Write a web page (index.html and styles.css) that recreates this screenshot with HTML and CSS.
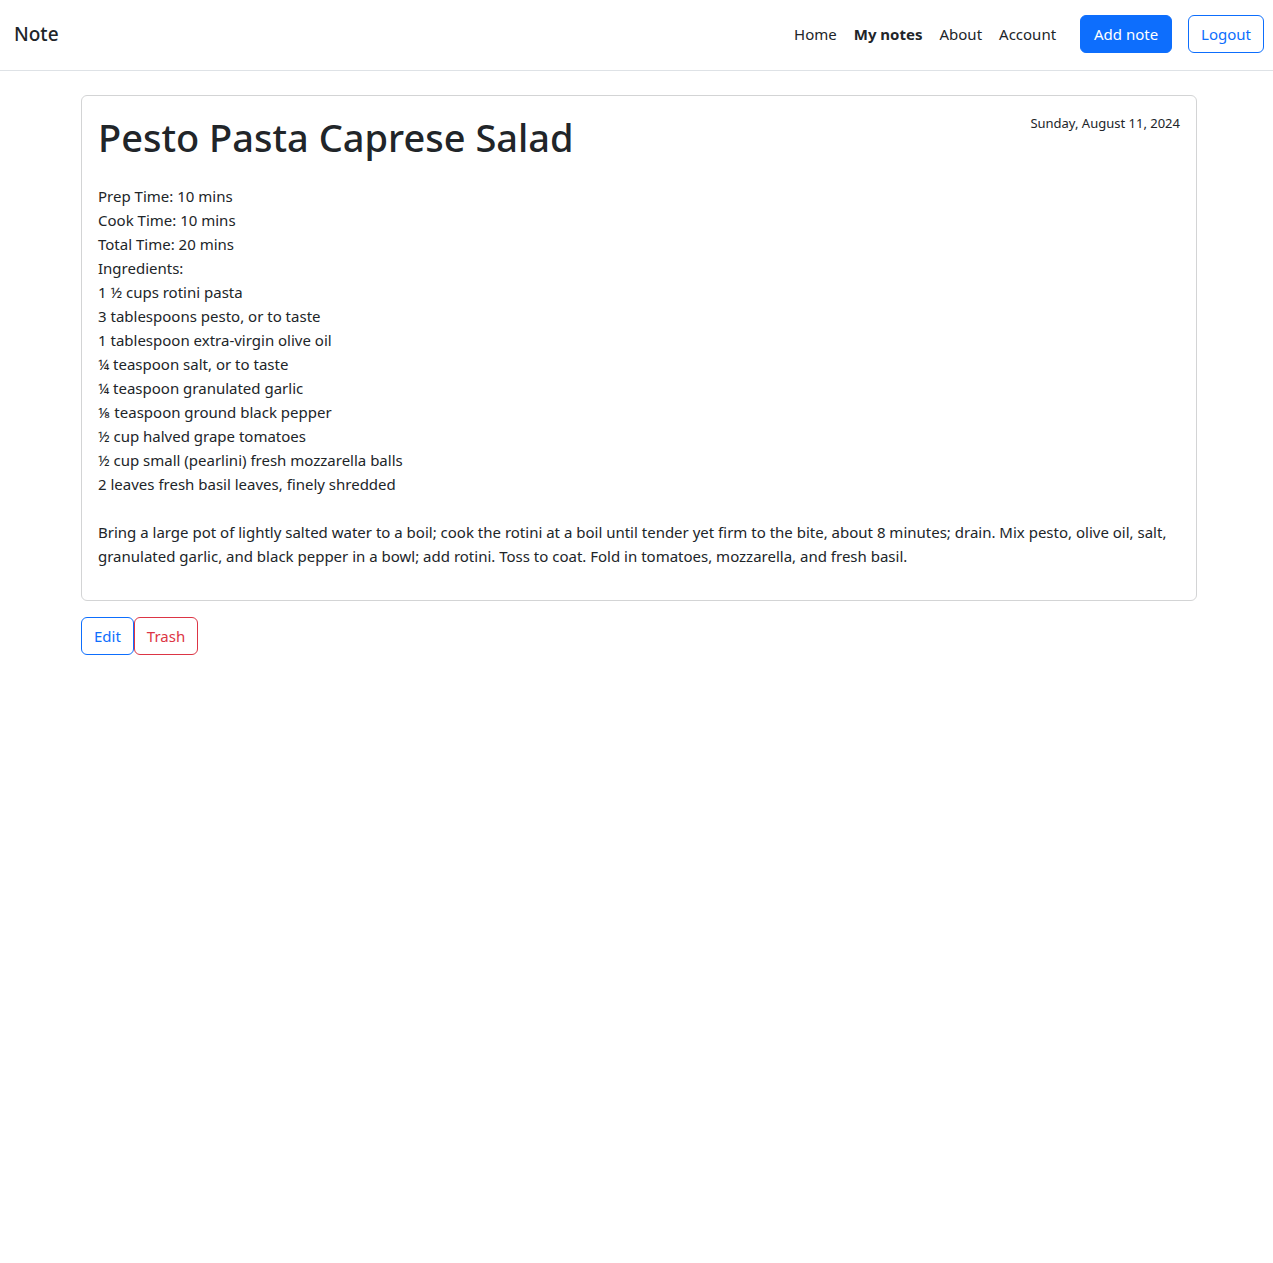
FILE: index.html
```html
<!DOCTYPE html>
<html lang="en">
<head>
  <meta charset="utf-8">
  <meta name="viewport" content="width=device-width, initial-scale=1">
  <title>Note</title>
  <link rel="stylesheet" href="styles.css">
</head>
<body>
  <header class="navbar">
    <a class="brand" href="#">Note</a>
    <nav class="nav">
      <a class="nav-link" href="#">Home</a>
      <a class="nav-link active" href="#" aria-current="page">My notes</a>
      <a class="nav-link" href="#">About</a>
      <a class="nav-link" href="#">Account</a>
    </nav>
    <div class="nav-actions">
      <button class="btn btn-primary" type="button">Add note</button>
      <button class="btn btn-outline" type="button">Logout</button>
    </div>
  </header>
  <main class="container">
    <article class="card">
      <div class="card-head">
        <h1 class="title">Pesto Pasta Caprese Salad</h1>
        <time class="date" datetime="2024-08-11">Sunday, August 11, 2024</time>
      </div>
      <p class="content">Prep Time: 10 mins
Cook Time: 10 mins
Total Time: 20 mins
Ingredients:
1 ½ cups rotini pasta
3 tablespoons pesto, or to taste
1 tablespoon extra-virgin olive oil
¼ teaspoon salt, or to taste
¼ teaspoon granulated garlic
⅛ teaspoon ground black pepper
½ cup halved grape tomatoes
½ cup small (pearlini) fresh mozzarella balls
2 leaves fresh basil leaves, finely shredded

Bring a large pot of lightly salted water to a boil; cook the rotini at a boil until tender yet firm to the bite, about 8 minutes; drain. Mix pesto, olive oil, salt, granulated garlic, and black pepper in a bowl; add rotini. Toss to coat. Fold in tomatoes, mozzarella, and fresh basil.</p>
    </article>
    <div class="actions">
      <button class="btn btn-outline" type="button">Edit</button>
      <button class="btn btn-danger" type="button">Trash</button>
    </div>
  </main>
</body>
</html>
```
FILE: styles.css
```css
*,
*::before,
*::after {
  box-sizing: border-box;
}

body {
  margin: 0;
  background: #fff;
  color: #212529;
  font-family: "Segoe UI", "Noto Sans", "Open Sans", sans-serif;
  font-size: 15px;
  line-height: 24px;
}

a {
  color: inherit;
  text-decoration: none;
}

.navbar {
  display: flex;
  align-items: center;
  padding: 15px 9px 17px 14px;
  border-bottom: 1px solid #dee2e6;
}

.brand {
  margin-right: auto;
  font-size: 19px;
  font-weight: 500;
}

.nav {
  display: flex;
  gap: 17px;
  margin-right: 24px;
}

.active {
  font-weight: 700;
}

.nav-actions {
  display: flex;
  gap: 16px;
}

.btn {
  padding: 6px 12px;
  border: 1px solid;
  border-radius: 6px;
  background: transparent;
  font: inherit;
  cursor: pointer;
}

.btn-primary {
  min-width: 92px;
  border-color: #0d6efd;
  background: #0d6efd;
  color: #fff;
}

.btn-outline {
  color: #0d6efd;
}

.btn-danger {
  color: #dc3545;
}

.container {
  padding: 24px 76px 24px 81px;
}

.card {
  padding: 16px;
  border: 1px solid #d3d4d5;
  border-radius: 6px;
}

.card-head {
  display: flex;
  justify-content: space-between;
  align-items: flex-start;
  gap: 16px;
  margin-bottom: 22px;
}

.title {
  margin: 0;
  font-size: 38px;
  font-weight: 500;
  line-height: 50px;
}

.date {
  font-size: 13px;
  line-height: 22px;
  white-space: nowrap;
}

.content {
  margin: 0 0 16px;
  white-space: pre-line;
}

.actions {
  display: flex;
  margin-top: 16px;
}
```
